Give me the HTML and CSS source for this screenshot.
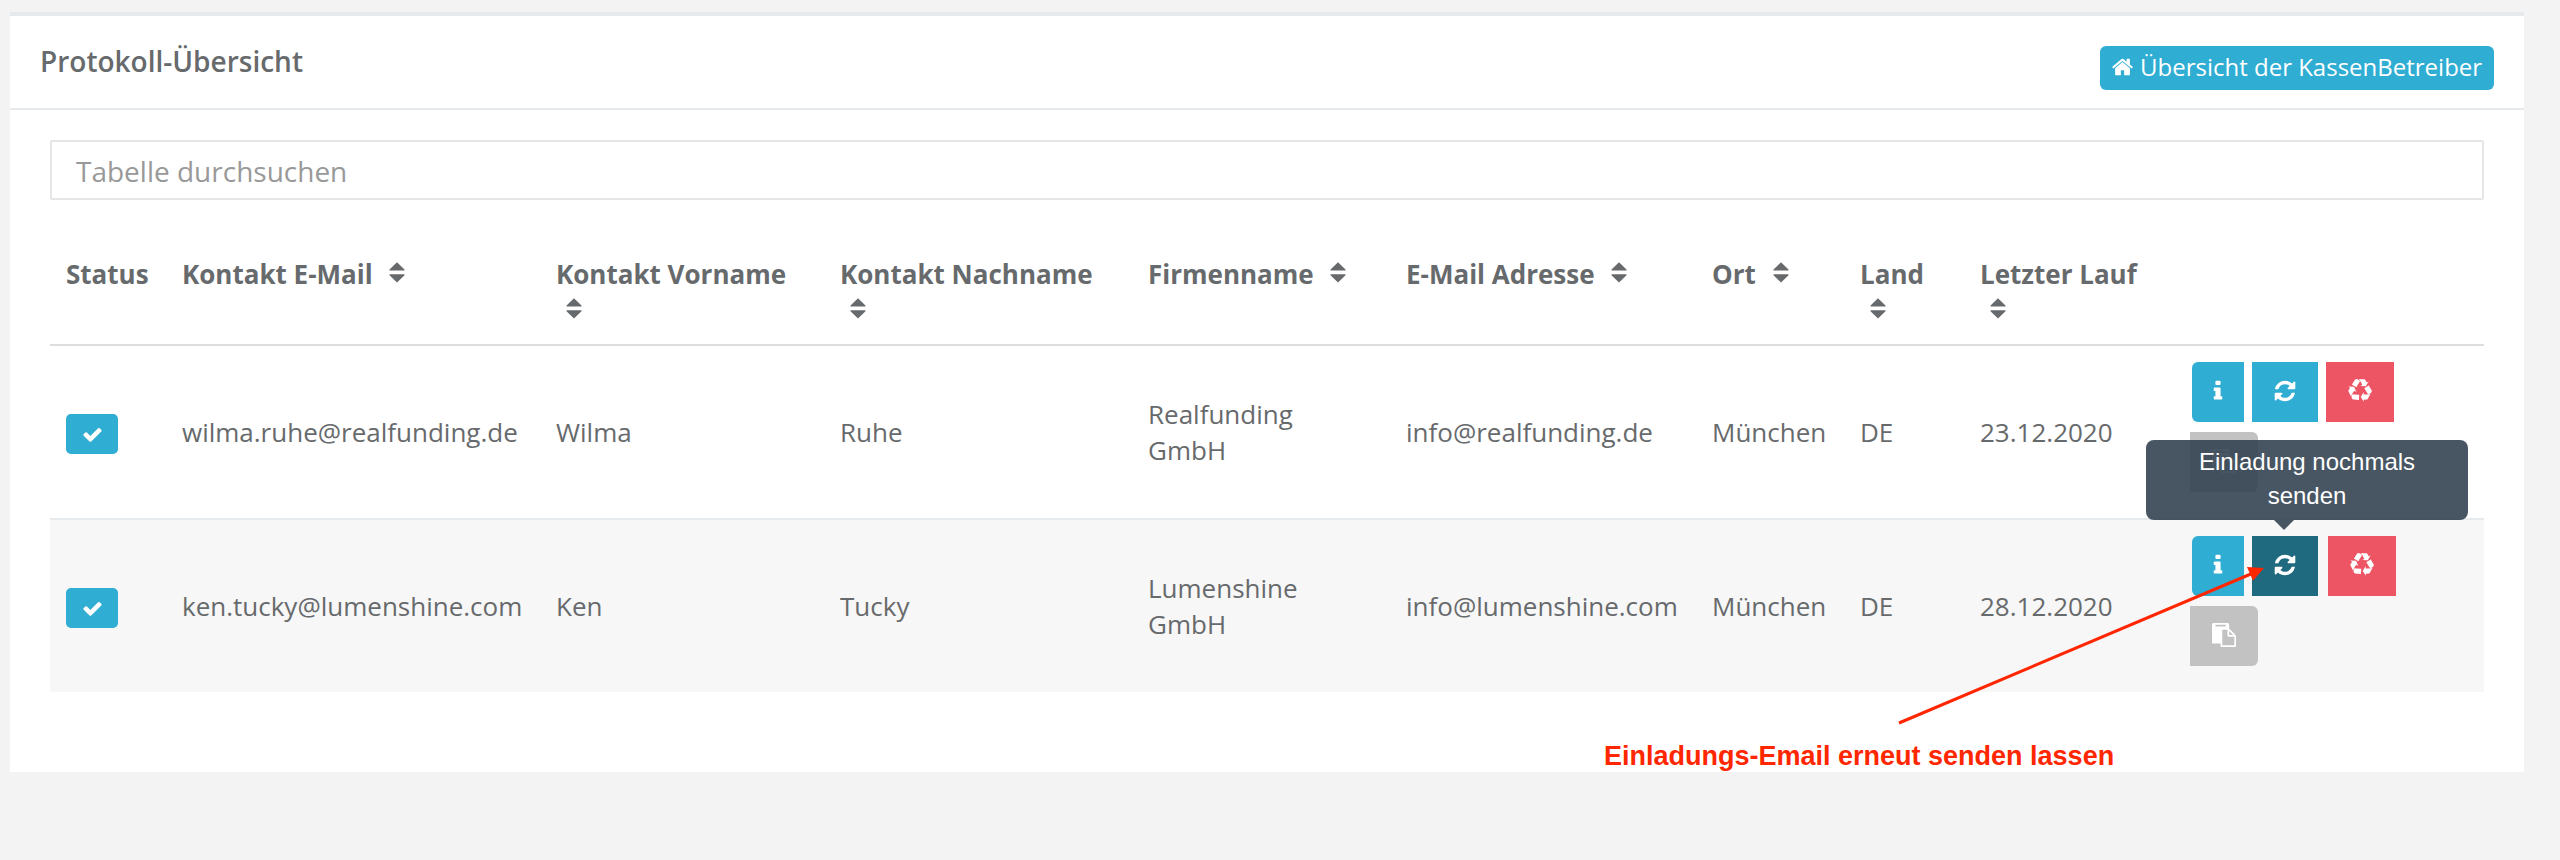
FILE: index.html
```html
<!DOCTYPE html>
<html lang="de">
<head>
<meta charset="utf-8">
<title>Protokoll-Übersicht</title>
<link rel="stylesheet" href="styles.css">
</head>
<body>
<svg class="sprite" aria-hidden="true">
  <symbol id="home" viewBox="0 0 1792 1792"><path d="M1472 992v480q0 26-19 45t-45 19h-384v-384h-256v384h-384q-26 0-45-19t-19-45v-480q0-1 .5-3t.5-3l575-474 575 474q1 2 1 6zm223-69l-62 74q-8 9-21 11h-3q-13 0-21-7l-692-577-692 577q-12 8-24 7-13-2-21-11l-62-74q-8-10-7-23.5t11-21.5l719-599q32-26 76-26t76 26l244 204v-195q0-14 9-23t23-9h192q14 0 23 9t9 23v408l219 182q10 8 11 21.5t-7 23.5z"/></symbol>
  <symbol id="check" viewBox="0 0 1792 1792"><path d="M1671 566q0 40-28 68l-724 724-136 136q-28 28-68 28t-68-28l-136-136-362-362q-28-28-28-68t28-68l136-136q28-28 68-28t68 28l294 295 656-657q28-28 68-28t68 28l136 136q28 28 28 68z"/></symbol>
  <symbol id="info" viewBox="0 0 1792 1792"><path d="M1216 1344v128q0 26-19 45t-45 19h-512q-26 0-45-19t-19-45v-128q0-26 19-45t45-19h64v-384h-64q-26 0-45-19t-19-45v-128q0-26 19-45t45-19h384q26 0 45 19t19 45v576h64q26 0 45 19t19 45zm-128-1152v192q0 26-19 45t-45 19h-256q-26 0-45-19t-19-45v-192q0-26 19-45t45-19h256q26 0 45 19t19 45z"/></symbol>
  <symbol id="refresh" viewBox="0 0 1792 1792"><path d="M1639 1056q0 5-1 7-64 268-268 434.500t-478 166.500q-146 0-282.500-55t-243.500-157l-129 129q-19 19-45 19t-45-19-19-45v-448q0-26 19-45t45-19h448q26 0 45 19t19 45-19 45l-137 137q71 66 161 102t187 36q134 0 250-65t186-179q11-17 53-117 8-23 30-23h192q13 0 22.500 9.500t9.500 22.500zm25-800v448q0 26-19 45t-45 19h-448q-26 0-45-19t-19-45 19-45l138-138q-148-137-349-137-134 0-250 65t-186 179q-11 17-53 117-8 23-30 23h-199q-13 0-22.500-9.500t-9.500-22.500v-7q65-268 270-434.500t480-166.500q146 0 284 55.500t245 156.500l130-129q19-19 45-19t45 19 19 45z"/></symbol>
  <symbol id="recycle" viewBox="0 0 1792 1792"><path d="M836 1169l-15 368-2 22-420-29q-36-3-67-31.500t-47-65.500q-11-27-14.500-55t4-65 12-55 21.500-64 19-53q78 12 509 28zm-387-586l180 379-147-92q-63 72-111.500 144.500t-72.500 125-39.500 94.500-18.500 63l-4 21-190-357q-17-26-18-56t6-47l8-18q35-63 114-188l-140-86zm1231 517l-188 359q-12 29-36.500 46.500t-43.500 20.500l-18 4q-71 7-219 12l8 164-230-367 211-362 7 173q170 16 283 5t170-33zm-785-924q-47 63-265 435l-317-187-19-12 225-356q20-31 60-45t80-10q24 2 48.500 12t42 21 41.500 33 36 34.500 36 39.500 32 35zm655 307l212 363q18 37 12.500 76t-27.500 74q-13 20-33 37t-38 28-48.500 22-47 16-51.500 14-46 12q-34-72-265-436l313-195zm-143-226l142-83-220 373-419-20 151-86q-34-89-75-166t-75.500-123.500-64.500-80-47-46.500l-17-13 405 1q31-3 58 10.500t39 28.500l11 15q39 61 112 190z"/></symbol>
  <symbol id="paste" viewBox="0 0 1792 1792"><path d="M768 1664h896v-640h-416q-40 0-68-28t-28-68v-416h-384v1152zm256-1440v-64q0-13-9.500-22.500t-22.500-9.500h-704q-13 0-22.500 9.500t-9.500 22.500v64q0 13 9.500 22.500t22.500 9.500h704q13 0 22.500-9.500t9.500-22.500zm256 672h299l-299-299v299zm512 128v672q0 40-28 68t-68 28h-960q-40 0-68-28t-28-68v-160h-544q-40 0-68-28t-28-68v-1344q0-40 28-68t68-28h1088q40 0 68 28t28 68v328q21 13 36 28l408 408q28 28 48 76t20 88z"/></symbol>
  <symbol id="sort" viewBox="0 0 16 21"><path d="M8 0.300L15.500 7.600V8.600H0.500V7.600zM0.500 12.200H15.500V13.200L8 20.500L0.500 13.200z"/></symbol>
</svg>

<main class="panel">
  <header class="panel-head">
    <h5 class="panel-title">Protokoll-Übersicht</h5>
    <a class="home-btn"><svg class="home-icon"><use href="#home"/></svg><span>Übersicht der KassenBetreiber</span></a>
  </header>
  <div class="panel-body">
    <input class="search" type="text" placeholder="Tabelle durchsuchen">
    <table class="log">
      <thead>
        <tr class="row head">
          <th>Status</th>
          <th>Kontakt E-Mail <svg class="sort"><use href="#sort"/></svg></th>
          <th>Kontakt Vorname<br><svg class="sort"><use href="#sort"/></svg></th>
          <th>Kontakt Nachname<br><svg class="sort"><use href="#sort"/></svg></th>
          <th>Firmenname <svg class="sort"><use href="#sort"/></svg></th>
          <th>E-Mail Adresse <svg class="sort"><use href="#sort"/></svg></th>
          <th>Ort <svg class="sort"><use href="#sort"/></svg></th>
          <th>Land<br><svg class="sort"><use href="#sort"/></svg></th>
          <th>Letzter Lauf<br><svg class="sort"><use href="#sort"/></svg></th>
          <th></th>
        </tr>
      </thead>
      <tbody>
        <tr class="row">
          <td><span class="label"><svg class="check"><use href="#check"/></svg></span></td>
          <td>wilma.ruhe@realfunding.de</td>
          <td>Wilma</td>
          <td>Ruhe</td>
          <td>Realfunding<br>GmbH</td>
          <td>info@realfunding.de</td>
          <td>München</td>
          <td>DE</td>
          <td>23.12.2020</td>
          <td class="actions">
            <div class="group">
              <a class="btn first"><svg class="icon"><use href="#info"/></svg></a>
              <a class="btn sync"><svg class="icon"><use href="#refresh"/></svg></a>
              <a class="btn danger"><svg class="icon"><use href="#recycle"/></svg></a>
            </div>
            <a class="btn muted"><svg class="icon"><use href="#paste"/></svg></a>
          </td>
        </tr>
        <tr class="row striped">
          <td><span class="label"><svg class="check"><use href="#check"/></svg></span></td>
          <td>ken.tucky@lumenshine.com</td>
          <td>Ken</td>
          <td>Tucky</td>
          <td>Lumenshine<br>GmbH</td>
          <td>info@lumenshine.com</td>
          <td>München</td>
          <td>DE</td>
          <td>28.12.2020</td>
          <td class="actions">
            <div class="group">
              <a class="btn first"><svg class="icon"><use href="#info"/></svg></a>
              <a class="btn sync hovered"><svg class="icon"><use href="#refresh"/></svg><span class="tooltip">Einladung nochmals<br>senden</span></a>
              <a class="btn danger shifted"><svg class="icon"><use href="#recycle"/></svg></a>
            </div>
            <a class="btn muted"><svg class="icon"><use href="#paste"/></svg></a>
          </td>
        </tr>
      </tbody>
    </table>
  </div>
</main>

<svg class="arrow" viewBox="0 0 380 170">
  <path class="arrow-line" d="M9 163L362 13.500"/>
  <path class="arrow-head" d="M374 8L357 7L363 20.800z"/>
</svg>
<div class="note">Einladungs-Email erneut senden lassen</div>
</body>
</html>
```
FILE: styles.css
```css
* {
  box-sizing: border-box;
}

body {
  margin: 0;
  padding: 12px 36px 0 10px;
  height: 860px;
  position: relative;
  overflow: hidden;
  background: #f3f3f3;
  color: #676a6c;
  font: 26px/36px "Open Sans", "Noto Sans", sans-serif;
}

svg {
  fill: currentColor;
}

.sprite {
  position: absolute;
  width: 0;
  height: 0;
}

.panel {
  height: 760px;
  background: #fff;
  border-top: 4px solid #e7eaec;
}

.panel-head {
  display: flex;
  justify-content: space-between;
  align-items: flex-start;
  height: 94px;
  padding: 30px 30px 0;
  border-bottom: 2px solid #e7eaec;
}

.panel-title {
  margin: 0;
  font-size: 28px;
  line-height: 30px;
  font-weight: 600;
}

.home-btn {
  display: flex;
  align-items: center;
  gap: 6px;
  width: 394px;
  height: 44px;
  padding: 0 0 3px 11px;
  border-radius: 6px;
  background: #2fadd2;
  color: #fff;
  font-size: 24px;
  white-space: nowrap;
}

.home-icon {
  width: 23px;
  height: 24px;
}

.panel-body {
  padding: 30px 40px 0;
}

.search {
  display: block;
  width: 100%;
  height: 60px;
  margin: 0 0 40px;
  padding: 2px 24px 0;
  border: 2px solid #e5e6e7;
  border-radius: 2px;
  background: #fff;
  font: 28px/40px "Open Sans", "Noto Sans", sans-serif;
}

.search::placeholder {
  color: #999;
  opacity: 1;
}

.log,
.log thead,
.log tbody {
  display: block;
}

.row {
  display: grid;
  grid-template-columns: 116px 374px 284px 308px 258px 306px 148px 120px 210px 310px;
  align-items: center;
  height: 172px;
  white-space: nowrap;
}

.row th,
.row td {
  padding: 0 16px;
  text-align: left;
}

.head {
  align-items: start;
  height: 106px;
  padding-top: 16px;
  border-bottom: 2px solid #ddd;
}

.striped {
  height: 174px;
  border-top: 2px solid #e7eaec;
  background: #f7f7f7;
}

.sort {
  width: 16px;
  height: 21px;
  margin-left: 10px;
  vertical-align: 1px;
}

.label {
  display: flex;
  align-items: center;
  justify-content: center;
  width: 52px;
  height: 40px;
  margin-top: 4px;
  border-radius: 5px;
  background: #2fadd2;
  color: #fff;
}

.check {
  width: 21px;
  height: 21px;
}

.row .actions {
  display: flex;
  flex-direction: column;
  gap: 10px;
  align-self: start;
  padding-top: 16px;
}

.group {
  display: flex;
  gap: 8px;
  padding-left: 2px;
}

.btn {
  display: flex;
  align-items: center;
  justify-content: center;
  width: 68px;
  height: 60px;
  padding-bottom: 2px;
  color: #fff;
}

.icon {
  width: 24px;
  height: 24px;
}

.first {
  width: 52px;
  border-radius: 6px 0 0 6px;
  background: #2fadd2;
}

.sync {
  position: relative;
  width: 66px;
  background: #2fadd2;
}

.hovered {
  background: #1f6a7f;
}

.danger {
  background: #ed5565;
}

.shifted {
  margin-left: 2px;
}

.muted {
  border-radius: 0 6px 6px 0;
  background: #c2c2c2;
}

.tooltip {
  position: absolute;
  left: -106px;
  bottom: 76px;
  width: 322px;
  height: 80px;
  padding: 5px 0;
  border-radius: 8px;
  background: rgba(52, 66, 81, 0.9);
  font: 24px/34px "Liberation Sans", Arial, sans-serif;
  text-align: center;
}

.tooltip::after {
  content: "";
  position: absolute;
  left: 128px;
  top: 80px;
  border: 10px solid transparent;
  border-top-color: rgba(52, 66, 81, 0.9);
  border-bottom: 0;
}

.arrow {
  position: absolute;
  left: 1890px;
  top: 560px;
  width: 380px;
  height: 170px;
}

.arrow-line {
  fill: none;
  stroke: #ff2600;
  stroke-width: 3;
}

.arrow-head {
  fill: #ff2600;
}

.note {
  position: absolute;
  left: 1604px;
  top: 738px;
  color: #ff2600;
  font: bold 27px/36px "Liberation Sans", Arial, sans-serif;
  white-space: nowrap;
}
```
